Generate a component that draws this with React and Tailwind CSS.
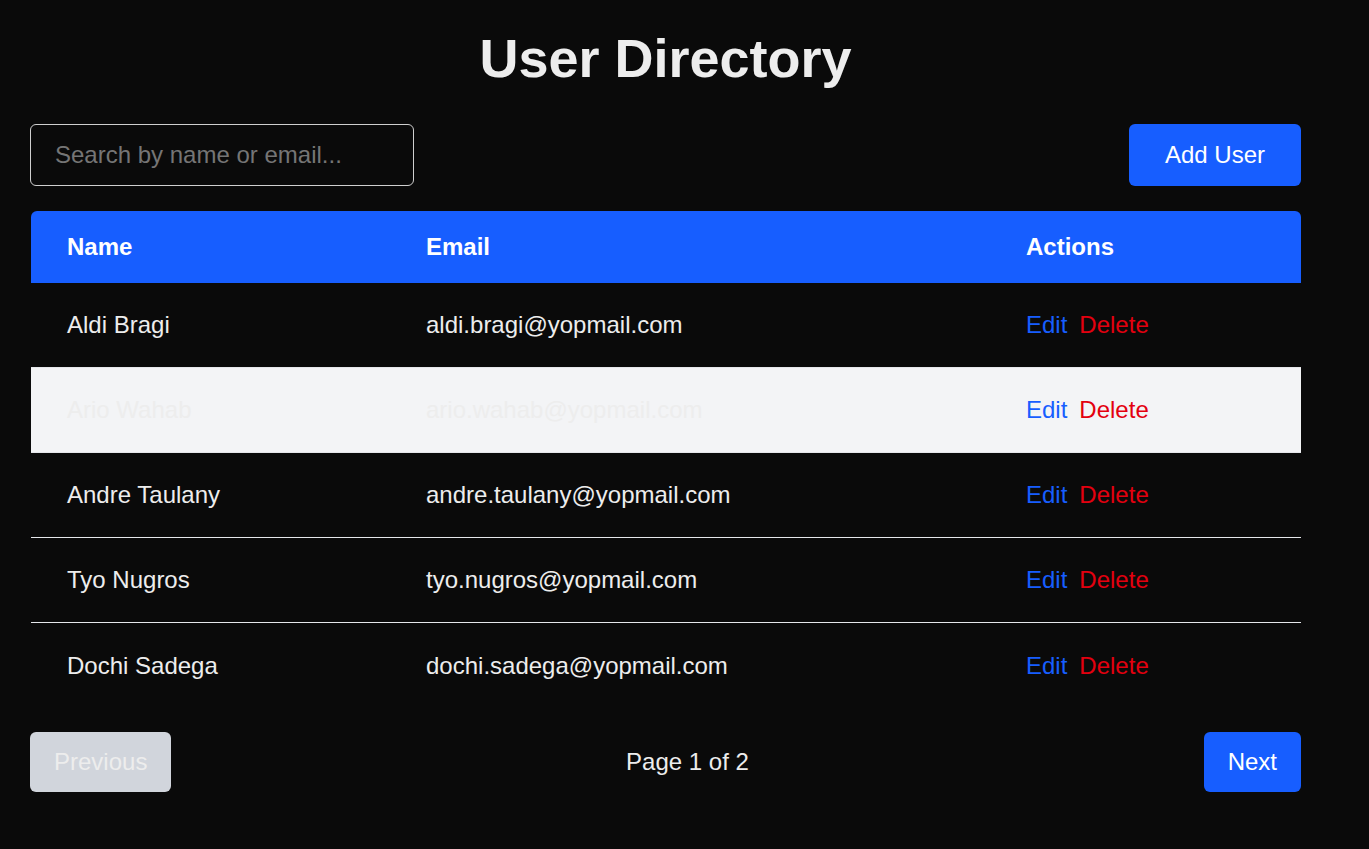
import { useState } from "react";

const users = [
  { id: 1, name: "Aldi Bragi", email: "aldi.bragi@yopmail.com" },
  { id: 2, name: "Ario Wahab", email: "ario.wahab@yopmail.com" },
  { id: 3, name: "Andre Taulany", email: "andre.taulany@yopmail.com" },
  { id: 4, name: "Tyo Nugros", email: "tyo.nugros@yopmail.com" },
  { id: 5, name: "Dochi Sadega", email: "dochi.sadega@yopmail.com" },
];

function App() {
  const [search, setSearch] = useState("");
  const [page] = useState(1);

  return (
    <div
      className="min-h-screen bg-[#0a0a0a] text-[#ededed] text-[24px]"
      style={{ fontFamily: '"Liberation Sans", Arial, sans-serif' }}
    >
      <div className="w-[1271px] ml-[30px] pt-[31px]">
        {/* Title */}
        <h1 className="text-[54px] leading-none font-bold text-center text-[#ededed]">
          User Directory
        </h1>

        {/* Toolbar */}
        <div className="flex justify-between items-center mt-[39px]">
          <input
            type="text"
            value={search}
            onChange={(e) => setSearch(e.target.value)}
            placeholder="Search by name or email..."
            className="w-[384px] h-[62px] px-6 bg-transparent border border-[#cfcfcf] rounded-md text-[24px] text-[#ededed] placeholder:text-[#757575] outline-none"
          />
          <button className="h-[62px] px-9 bg-[#175eff] text-white rounded-md">
            Add User
          </button>
        </div>

        {/* Table */}
        <div className="mt-[25px] ml-px">
          <div className="grid grid-cols-[359px_600px_311px] h-[72px] items-center bg-[#175eff] rounded-t-md font-bold text-white">
            <div className="px-9">Name</div>
            <div className="px-9">Email</div>
            <div className="px-9">Actions</div>
          </div>
          {users.map((user, index) => (
            <div
              key={user.id}
              className={
                "grid grid-cols-[359px_600px_311px] h-[85px] items-center " +
                (index === 1 ? "bg-gray-100 " : "") +
                (index < users.length - 1 ? "border-b border-gray-200" : "")
              }
            >
              <div className="px-9">{user.name}</div>
              <div className="px-9">{user.email}</div>
              <div className="px-9">
                <button className="text-[#175eff] mr-3">Edit</button>
                <button className="text-[#e3000f]">Delete</button>
              </div>
            </div>
          ))}
        </div>

        {/* Pagination */}
        <div className="flex justify-between items-center mt-6">
          <button
            disabled
            className="h-[60px] px-6 bg-gray-300 text-[#ededed] rounded-md"
          >
            Previous
          </button>
          <span>Page {page} of 2</span>
          <button className="h-[60px] px-6 bg-[#175eff] text-white rounded-md">
            Next
          </button>
        </div>
      </div>
    </div>
  );
}

export default App;
